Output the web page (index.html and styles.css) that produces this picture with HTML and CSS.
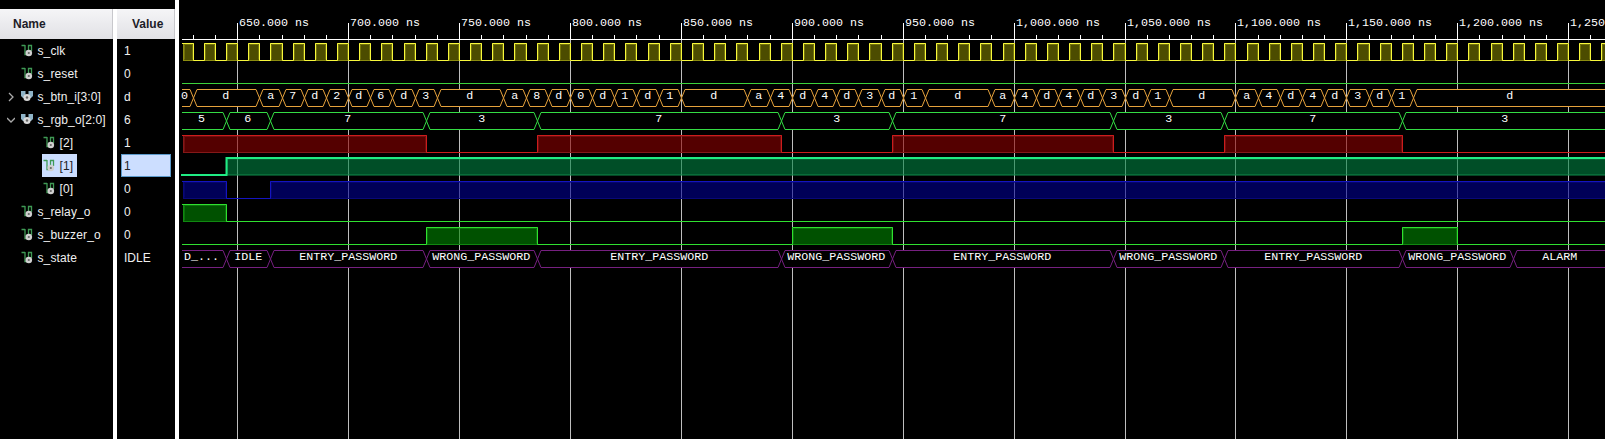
FILE: index.html
```html
<!DOCTYPE html>
<html lang="en">
<head>
<meta charset="utf-8">
<title>Waveform</title>
<link rel="stylesheet" href="styles.css">
</head>
<body>
<svg class="defs" width="0" height="0" aria-hidden="true">
  <symbol id="sig" viewBox="0 0 12 13">
    <path d="M.5 1.5H4M4 1V10.5H7M7.5 7V1.5H10.5V7" fill="none" stroke="#3f9a55" stroke-width="1.3"/>
    <circle cx="7.8" cy="9" r="3.3" fill="#d0d0d0"/>
    <circle cx="7.8" cy="9" r="1.1" fill="#666"/>
  </symbol>
  <symbol id="bus" viewBox="0 0 12 13">
    <path d="M0 1H4.5V8H2L0 6ZM7.5 1H12V6L10 8H7.5Z" fill="#8fb4c8"/>
    <circle cx="6" cy="7.5" r="3.6" fill="#d8d8d8"/>
    <circle cx="6" cy="7.5" r="1.2" fill="#666"/>
  </symbol>
</svg>
<main class="viewer">
  <section class="names">
    <div class="head">Name</div>
    <div class="row"><svg class="icon"><use href="#sig"/></svg>s_clk</div>
    <div class="row"><svg class="icon"><use href="#sig"/></svg>s_reset</div>
    <div class="row parent"><svg class="arrow" viewBox="0 0 8 10"><path d="M2 1L6 5L2 9"/></svg><svg class="icon"><use href="#bus"/></svg>s_btn_i[3:0]</div>
    <div class="row parent"><svg class="arrow" viewBox="0 0 8 10"><path d="M0 3L4 7L8 3"/></svg><svg class="icon"><use href="#bus"/></svg>s_rgb_o[2:0]</div>
    <div class="row child"><span class="item"><svg class="icon"><use href="#sig"/></svg>[2]</span></div>
    <div class="row child"><span class="item selected"><svg class="icon"><use href="#sig"/></svg>[1]</span></div>
    <div class="row child"><span class="item"><svg class="icon"><use href="#sig"/></svg>[0]</span></div>
    <div class="row"><svg class="icon"><use href="#sig"/></svg>s_relay_o</div>
    <div class="row"><svg class="icon"><use href="#sig"/></svg>s_buzzer_o</div>
    <div class="row"><svg class="icon"><use href="#sig"/></svg>s_state</div>
  </section>
  <section class="values">
    <div class="head">Value</div>
    <div class="val">1</div>
    <div class="val">0</div>
    <div class="val">d</div>
    <div class="val">6</div>
    <div class="val">1</div>
    <div class="val active">1</div>
    <div class="val">0</div>
    <div class="val">0</div>
    <div class="val">0</div>
    <div class="val">IDLE</div>
  </section>
  <svg class="waves" id="waves" width="1426" height="439" viewBox="179 0 1426 439"></svg>
</main>
<script src="waves.js"></script>
</body>
</html>
```
FILE: styles.css
```css
body { margin: 0; background: #000; overflow: hidden; }
.defs { position: absolute; }
.viewer {
  display: grid;
  grid-template-columns: 113px 62px 1fr;
  height: 439px;
  color: #f0f0f0;
  font: 12px "Liberation Sans", Arial, sans-serif;
}
.names { margin-top: 9px; }
.values { margin-top: 9px; border-left: 4px solid #fff; }
.head {
  box-sizing: border-box;
  height: 30px;
  padding-left: 13px;
  line-height: 31px;
  font-weight: bold;
  color: #1c1c28;
  background: linear-gradient(#f5f5f7, #e1e1e5);
  border-right: 1px solid #c8c8cc;
}
.values .head { padding-left: 15px; }
.row { display: flex; align-items: center; height: 23px; padding-left: 21px; white-space: nowrap; letter-spacing: .12px; }
.row.parent { padding-left: 7px; }
.row.child { padding-left: 42px; }
.icon { width: 12px; height: 13px; margin-right: 4.5px; flex: none; }
.arrow { width: 8px; height: 10px; margin-right: 6px; flex: none; fill: none; stroke: #aaa; stroke-width: 1.3; }
.item { display: flex; align-items: center; height: 23px; padding: 0 4px 0 1px; }
.selected { background: #ccdeff; color: #222; }
.val { box-sizing: border-box; height: 23px; line-height: 24px; margin: 0 4px; padding-left: 3px; }
.val.active { background: #ccdeff; color: #222; border: 1px solid #5c9acb; line-height: 22px; padding-left: 2px; }
.waves { display: block; border-left: 4px solid #fff; }
.waves text { font-family: "Liberation Mono", "Courier New", monospace; font-size: 11.66px; fill: #fff; }
```
FILE: waves.js
```js
const START = 182, END = 1608;
const X = t => t === null ? START : t === Infinity ? END : Math.round(237.2 + (t - 650) * 2.21833) + 0.5;
const out = [];
const line = (d, color, w = 1) => out.push(`<path d="${d}" fill="none" stroke="${color}" stroke-width="${w}"/>`);

// Logic trace: filled while high. Intervals are [rise, fall] in ns.
function logic(top, bottom, highs, color, fill, dim, w = 1) {
  const startHigh = highs.length && highs[0][0] === null;
  let d = `M${w > 1 ? 181 : START} ${startHigh ? top : bottom}`;
  let open = true;
  for (const [a, b] of highs) {
    const xa = a === null ? 183.5 : X(a), xb = X(b);
    out.push(`<rect x="${xa}" y="${top}" width="${xb - xa}" height="${bottom - top}" fill="${fill}" stroke="${dim}"/>`);
    out.push(`<path d="M${xa + 1} ${bottom - 1}V${top + 1}H${xb - 1}V${bottom - 1}" fill="none" stroke="${dim}" opacity=".6"/>`);
    if (a !== null) d += `H${xa}V${top}`;
    if (b === Infinity) {
      line(d + `H${END}`, color, w);
      open = false;
    } else {
      line(d + `H${xb}V${bottom}`, color, w);
      d = `M${xb} ${bottom}`;
    }
  }
  if (open) line(d + `H${END}`, color, w);
}

// Black cells hide the grid behind bus values.
function bus(top, bottom, edges, labels, color) {
  const mid = (top + bottom) / 2;
  const all = [null, ...edges, Infinity];
  labels.forEach((label, i) => {
    const a = X(all[i]), b = X(all[i + 1]), first = i === 0, last = i === labels.length - 1;
    let d = first ? `M${a} ${top}` : `M${a} ${mid}L${a + 3.5} ${top}`;
    d += last ? `H${b}V${bottom}` : `H${b - 3.5}L${b} ${mid}L${b - 3.5} ${bottom}`;
    d += first ? `H${a}` : `H${a + 3.5}Z`;
    out.push(`<path d="${d}" fill="#000" stroke="${color}"/>`);
    const n = label.length, x = Math.round((a + b) / 2 - n * 3.5) - (first ? 3 : 0.7);
    out.push(`<text x="${x}" y="${top + 9.5}" textLength="${n * 7}">${label}</text>`);
  });
}

for (let t = 650; t <= 1250; t += 50) {
  line(`M${X(t)} 40V439`, '#bebebe');
}

const clock = [[null, 630]];
for (let t = 635; t < 1270; t += 10) clock.push([t, t + 5]);
logic(43.5, 60.5, clock, '#f8f83c', 'rgba(80,80,0,.95)', '#8c8c10');
logic(83.5, 83.5, [], '#3cd23c', 'none', 'none');

const edges = [630];
for (let t = 660; t <= 1180; t += 10) {
  if (![750, 760, 860, 870, 970, 980, 1080, 1090].includes(t)) edges.push(t);
}
bus(89.5, 106.5, edges, [...'0da7d2d6d3da8d0d1d1da4d4d3d1da4d4d3d1da4d4d3d1d'], '#e6a23c');

const rgb = [645, 665, 735, 785, 895, 945, 1045, 1095, 1175];
bus(112.5, 129.5, rgb, [...'5673737373'], '#34dc44');
logic(135.5, 152.5, [[null, 735], [785, 895], [945, 1045], [1095, 1175]], '#cc1c1c', 'rgba(140,0,0,.6)', '#841818');
logic(158, 175, [[645, Infinity]], '#20ec84', 'rgba(0,130,65,.6)', '#108c4c', 2);
logic(181.5, 198.5, [[null, 645], [665, Infinity]], '#1414c0', 'rgba(0,0,145,.6)', '#080878');
logic(204.5, 221.5, [[null, 645]], '#30e030', 'rgba(0,130,0,.62)', '#108810');
logic(227.5, 244.5, [[735, 785], [900, 945], [1175, 1200]], '#30e030', 'rgba(0,130,0,.62)', '#108810');
bus(250.5, 267.5, [...rgb, 1225],
  ['D_...', 'IDLE', 'ENTRY_PASSWORD', 'WRONG_PASSWORD', 'ENTRY_PASSWORD', 'WRONG_PASSWORD',
   'ENTRY_PASSWORD', 'WRONG_PASSWORD', 'ENTRY_PASSWORD', 'WRONG_PASSWORD', 'ALARM'], '#762080');

line(`M${START} 39.5H1605`, '#fff');
for (let t = 630; t <= 1260; t += 10) {
  line(`M${X(t)} ${t % 50 ? 35 : 23}V39`, '#fff');
  if (t % 50 === 0) {
    const label = t.toLocaleString('en-US') + '.000 ns';
    out.push(`<text x="${X(t) + 1.5}" y="26" textLength="${label.length * 7}">${label}</text>`);
  }
}
document.getElementById('waves').innerHTML = out.join('');
```
